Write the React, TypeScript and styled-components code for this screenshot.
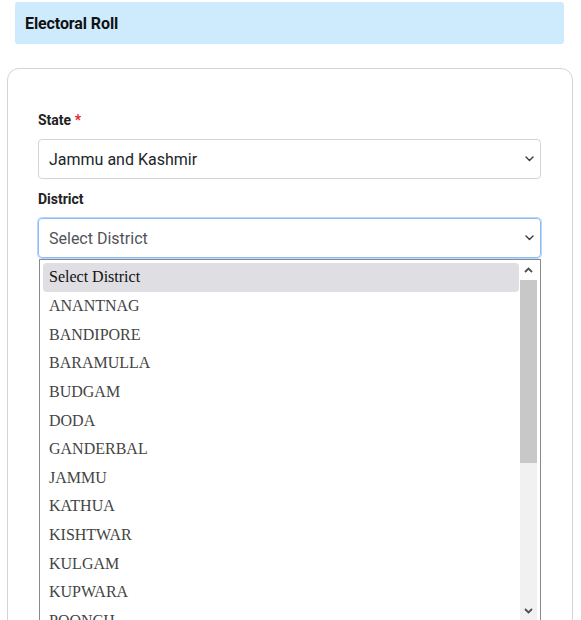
import styled, { createGlobalStyle } from "styled-components";

const districts = [
  "ANANTNAG",
  "BANDIPORE",
  "BARAMULLA",
  "BUDGAM",
  "DODA",
  "GANDERBAL",
  "JAMMU",
  "KATHUA",
  "KISHTWAR",
  "KULGAM",
  "KUPWARA",
  "POONCH",
  "PULWAMA",
  "RAJOURI",
  "RAMBAN",
  "REASI",
  "SAMBA",
  "SHOPIAN",
  "SRINAGAR",
  "UDHAMPUR",
];

const GlobalStyle = createGlobalStyle`
  html, body {
    margin: 0;
    padding: 0;
    overflow: hidden;
    background: #ffffff;
  }
  body {
    font-family: Roboto, "Liberation Sans", Arial, sans-serif;
    color: #212529;
  }
  * {
    box-sizing: border-box;
  }
`;

const Chevron = () => (
  <svg width="9" height="6" viewBox="0 0 9 6" fill="none">
    <path
      d="M1 1l3.5 3.5L8 1"
      stroke="#343a40"
      strokeWidth="1.4"
      strokeLinecap="round"
      strokeLinejoin="round"
    />
  </svg>
);

export default function App() {
  return (
    <>
      <GlobalStyle />
      <Page>
        <Banner>
          <h1>Electoral Roll</h1>
        </Banner>

        <Card>
          <Field>
            <Label>
              State <Required>*</Required>
            </Label>
            <SelectBox>
              <span>Jammu and Kashmir</span>
              <Chevron />
            </SelectBox>
          </Field>

          <Field>
            <Label>District</Label>
            <SelectWrap>
              <SelectBox $focused>
                <Placeholder>Select District</Placeholder>
                <Chevron />
              </SelectBox>

              <OptionList>
                <Options>
                  <Option $selected>Select District</Option>
                  {districts.map((d) => (
                    <Option key={d}>{d}</Option>
                  ))}
                </Options>
                <ScrollBar>
                  <ScrollButton>
                    <svg width="9" height="6" viewBox="0 0 9 6">
                      <path
                        d="M1 5l3.5-3.5L8 5"
                        stroke="#505050"
                        strokeWidth="1.8"
                        fill="none"
                      />
                    </svg>
                  </ScrollButton>
                  <Track>
                    <Thumb />
                  </Track>
                  <ScrollButton>
                    <svg width="9" height="6" viewBox="0 0 9 6">
                      <path
                        d="M1 1l3.5 3.5L8 1"
                        stroke="#505050"
                        strokeWidth="1.8"
                        fill="none"
                      />
                    </svg>
                  </ScrollButton>
                </ScrollBar>
              </OptionList>
            </SelectWrap>
          </Field>
        </Card>
      </Page>
    </>
  );
}

const Page = styled.div`
  width: 581px;
  padding: 2px 0 0 7px;
  display: flex;
  flex-direction: column;
`;

const Banner = styled.div`
  margin: 0 17px 0 8px;
  height: 42px;
  background: #cdebfc;
  border-radius: 3px;
  display: flex;
  align-items: center;
  padding: 0 10px;

  & > h1 {
    margin: 0;
    font-size: 16px;
    font-weight: 700;
    color: #111111;
    letter-spacing: -0.1px;
  }
`;

const Card = styled.div`
  margin-top: 24px;
  width: 566px;
  min-height: 600px;
  border: 1px solid #d4d4d4;
  border-radius: 12px;
  padding: 41px 31px 0 30px;
  display: flex;
  flex-direction: column;
  gap: 10px;
`;

const Field = styled.div`
  display: flex;
  flex-direction: column;
  gap: 9px;
`;

const Label = styled.label`
  font-size: 14px;
  line-height: 20px;
  font-weight: 700;
  color: #222222;
`;

const Required = styled.span`
  color: #e3202e;
`;

const SelectWrap = styled.div`
  position: relative;
`;

const SelectBox = styled.div<{ $focused?: boolean }>`
  height: 40px;
  width: 503px;
  border: 1px solid ${(p) => (p.$focused ? "#8dbdf8" : "#d2d4d7")};
  box-shadow: ${(p) =>
    p.$focused ? "0 0 0 1px rgba(141, 189, 248, 0.6)" : "none"};
  border-radius: 4px;
  padding: 0 6px 0 10px;
  display: flex;
  align-items: center;
  justify-content: space-between;
  font-size: 16px;
  color: #212529;
`;

const Placeholder = styled.span`
  color: #505459;
`;

const OptionList = styled.div`
  position: absolute;
  top: 41px;
  left: 1px;
  width: 502px;
  height: 362px;
  border: 1px solid #8a8a8a;
  border-bottom: none;
  background: #ffffff;
  display: flex;
  overflow: hidden;
  font-family: "Liberation Serif", "Times New Roman", serif;
  font-size: 16px;
`;

const Options = styled.div`
  flex: 1;
  padding: 3px 1px 0 3px;
  display: flex;
  flex-direction: column;
`;

const Option = styled.div<{ $selected?: boolean }>`
  flex: 0 0 28.65px;
  display: flex;
  align-items: center;
  padding-left: 6px;
  border-radius: 4px;
  background: ${(p) => (p.$selected ? "#dedee3" : "transparent")};
  color: ${(p) => (p.$selected ? "#111111" : "#444444")};
  white-space: nowrap;
`;

const ScrollBar = styled.div`
  width: 17px;
  margin-right: 3px;
  display: flex;
  flex-direction: column;
  background: #f1f1f1;
`;

const ScrollButton = styled.div`
  height: 20px;
  display: flex;
  align-items: center;
  justify-content: center;
  background: #ffffff;

  &:last-child {
    height: 18px;
    align-items: flex-start;
    padding-top: 5px;
    background: #f1f1f1;
  }
`;

const Track = styled.div`
  flex: 1;
  display: flex;
  flex-direction: column;
`;

const Thumb = styled.div`
  height: 183px;
  background: #c8c8c8;
`;
